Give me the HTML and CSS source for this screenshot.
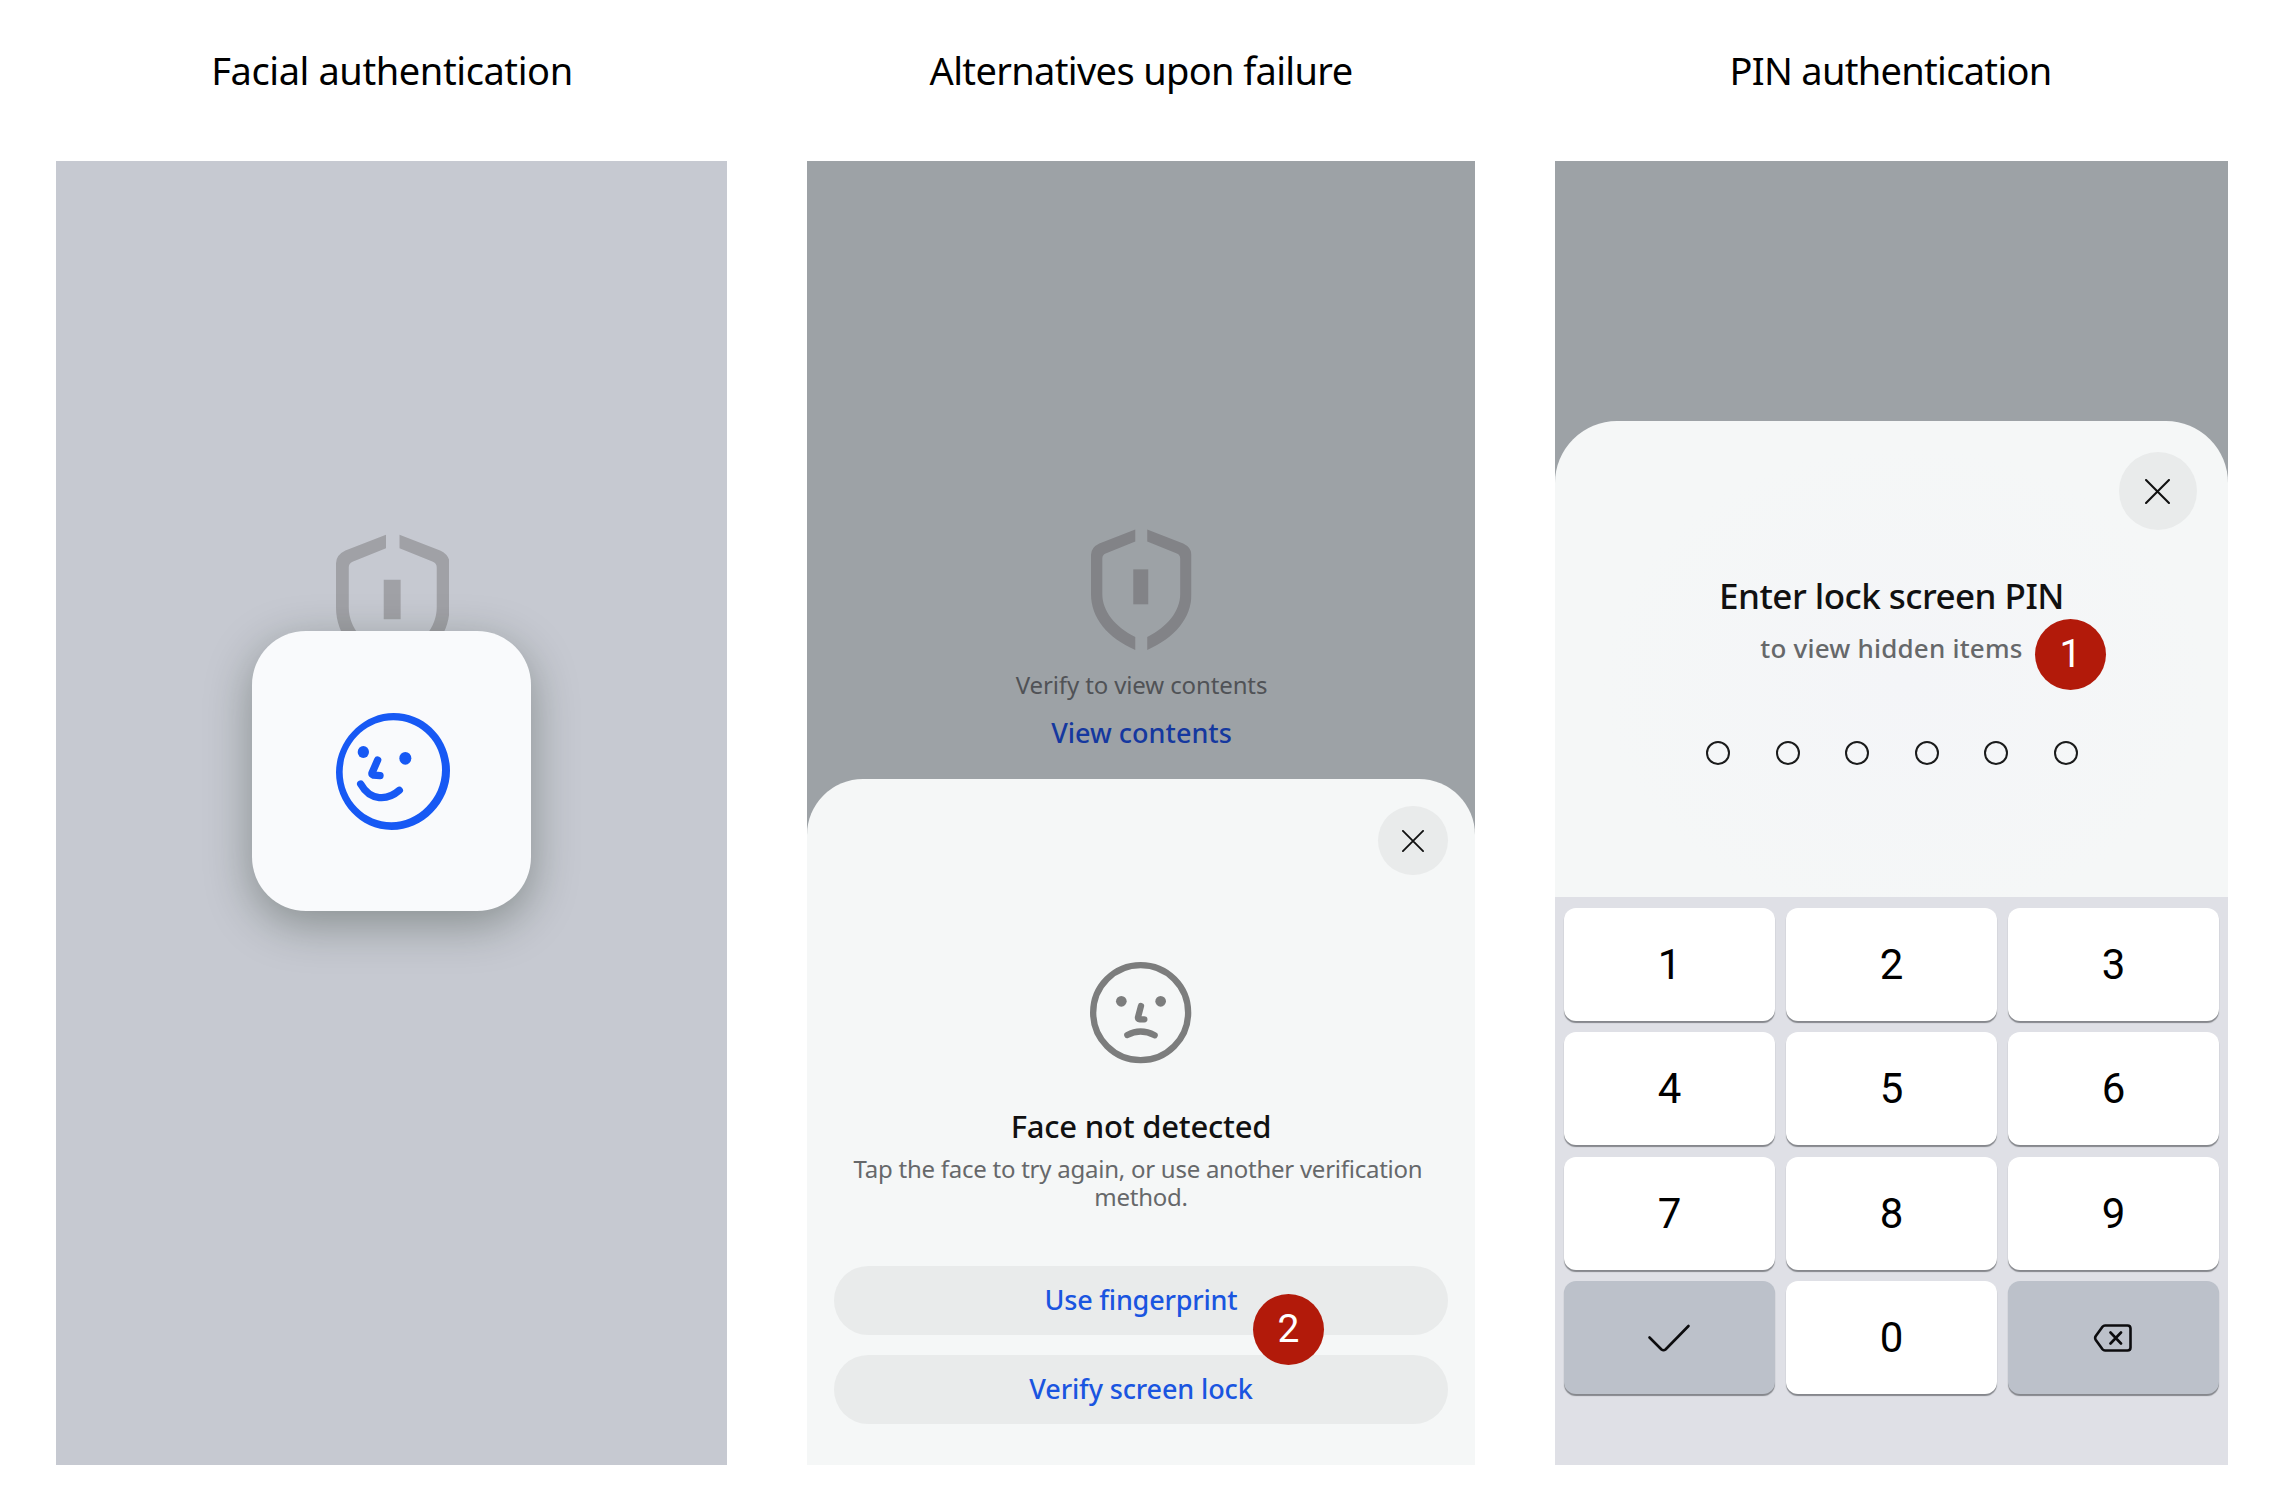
FILE: index.html
```html
<!DOCTYPE html>
<html lang="en">
<head>
<meta charset="utf-8">
<title>Authentication</title>
<link rel="stylesheet" href="styles.css">
</head>
<body>
<svg class="defs" width="0" height="0" aria-hidden="true">
  <symbol id="shield" viewBox="395 88 302 363">
    <path id="shield-half" d="M528 89 420 131Q395 143 395 165V283C395 355 445 415 528 451V412C468 382 429 335 429 283V176Q429 165 439 161L528 125Z"/>
    <use href="#shield-half" transform="matrix(-1 0 0 1 1092 0)"/>
    <rect x="522" y="209" width="45" height="105"/>
  </symbol>
  <symbol id="cross" viewBox="0 0 24 24">
    <path d="M1 1 23 23M23 1 1 23" fill="none" stroke="currentColor" stroke-width="2" stroke-linecap="round"/>
  </symbol>
</svg>

<main class="page">
  <section class="col">
    <h2 class="heading heading-facial">Facial authentication</h2>
    <div class="screen screen-facial">
      <svg class="shield shield-large"><use href="#shield"/></svg>
      <div class="face-card">
        <svg class="smile" viewBox="0 0 342 351">
          <path fill-rule="evenodd" d="M173 0C268 0 342 78 342 173S262 351 167 351 0 270 0 178 78 0 173 0ZM172 22C90 22 20 92 20 177S88 328 166 328 318 258 318 171 250 22 172 22Z"/>
          <ellipse cx="82" cy="117" rx="17" ry="18"/>
          <ellipse cx="208" cy="136" rx="18" ry="19"/>
          <path class="line" d="M125 141 108 180Q107 184 112 186L132 188M74 213C103 265 155 263 190 232"/>
        </svg>
      </div>
    </div>
  </section>

  <section class="col">
    <h2 class="heading heading-alternatives">Alternatives upon failure</h2>
    <div class="screen screen-dim">
      <div class="backdrop">
        <svg class="shield"><use href="#shield"/></svg>
        <p class="verify">Verify to view contents</p>
        <a class="view">View contents</a>
      </div>
      <div class="sheet sheet-face">
        <button class="close"><svg><use href="#cross"/></svg></button>
        <svg class="sad" viewBox="150 96 304 304">
          <circle cx="302" cy="248" r="142.500"/>
          <path d="M303 228 294 262Q293 268 299 268H313M262 315Q302 294 344 316"/>
          <circle class="dot" cx="244" cy="214" r="16"/>
          <circle class="dot" cx="362" cy="214" r="16"/>
        </svg>
        <h3 class="not-detected">Face not detected</h3>
        <p class="hint"><span class="hint-line hint-first">Tap the face to try again, or use another verification</span> <span class="hint-line">method.</span></p>
        <div class="actions">
          <button class="action action-finger">Use fingerprint</button>
          <button class="action">Verify screen lock</button>
        </div>
        <span class="badge badge-two">2</span>
      </div>
    </div>
  </section>

  <section class="col">
    <h2 class="heading heading-pin">PIN authentication</h2>
    <div class="screen screen-dim">
      <div class="backdrop backdrop-short"></div>
      <div class="sheet sheet-pin">
        <button class="close close-large"><svg><use href="#cross"/></svg></button>
        <h3 class="enter">Enter lock screen PIN</h3>
        <p class="hidden-items">to view hidden items</p>
        <div class="dots"><i></i><i></i><i></i><i></i><i></i><i></i></div>
        <span class="badge badge-one">1</span>
      </div>
      <div class="keypad">
        <button class="key">1</button><button class="key">2</button><button class="key">3</button>
        <button class="key">4</button><button class="key">5</button><button class="key">6</button>
        <button class="key">7</button><button class="key">8</button><button class="key">9</button>
        <button class="key key-grey">
          <svg width="44" height="30" viewBox="0 0 44 30"><path d="M2.500 14.500 14.500 26.500Q16.500 28 18.500 26.500L41.500 3"/></svg>
        </button>
        <button class="key">0</button>
        <button class="key key-grey">
          <svg width="40" height="30" viewBox="0 0 40 30"><path d="M12 2.500H34.500Q37.500 2.500 37.500 5.500V24.500Q37.500 27.500 34.500 27.500H12Q10.500 27.500 9.500 26.200L2.800 17Q1.500 15 2.800 13L9.500 3.800Q10.500 2.500 12 2.500ZM17.500 9.500 28 20.500M28 9.500 17.500 20.500"/></svg>
        </button>
      </div>
    </div>
  </section>
</main>
</body>
</html>
```
FILE: styles.css
```css
* { box-sizing: border-box; }
body {
  margin: 0;
  background: #fff;
  font-family: "Noto Sans", "Open Sans", sans-serif;
  color: #000;
}
h2, h3, p { margin: 0; font-weight: 400; }
button { border: 0; padding: 0; font-family: inherit; color: inherit; }
.defs { position: absolute; }

.page {
  display: grid;
  grid-template-columns: 671px 668px 673px;
  column-gap: 80px;
  padding: 40px 0 0 56px;
}
.heading {
  height: 60px;
  margin-bottom: 61px;
  font-size: 38px;
  line-height: 60px;
  text-align: center;
  white-space: nowrap;
}
.heading-facial { letter-spacing: -.41px; padding-left: 1px; }
.heading-alternatives { letter-spacing: -.65px; }
.heading-pin { letter-spacing: -.69px; padding-right: 2px; }

.screen { position: relative; display: flex; flex-direction: column; height: 1304px; }
.screen-facial { align-items: center; padding: 372.5px 0 0 2px; background: #c6c9d1; }
.screen-dim { background: #9da2a6; }

.shield { display: block; width: 100.500px; height: 121px; fill: #828387; }
.shield-large { width: 113.500px; height: 137px; fill: #a0a1a6; }

/* The card floats above the shield */
.face-card {
  position: absolute;
  left: 195.700px;
  top: 470.300px;
  display: flex;
  align-items: center;
  justify-content: center;
  width: 279.600px;
  height: 279.600px;
  padding: 1px 0 0 4px;
  border-radius: 54px;
  background: #f9fafc;
  box-shadow: 0 13px 46px rgba(15, 30, 15, .34);
}
.smile { width: 114px; height: 117px; fill: #1759f4; }
.smile .line {
  fill: none;
  stroke: #1759f4;
  stroke-width: 22;
  stroke-linecap: round;
  stroke-linejoin: round;
}

.backdrop {
  display: flex;
  flex-direction: column;
  align-items: center;
  height: 617.500px;
  padding: 368px 0 0 1px;
}
.backdrop-short { height: 260px; padding: 0; }
.verify { margin-top: 19px; font-size: 24px; line-height: 32px; letter-spacing: -.12px; color: #505256; }
.view { margin-top: 14px; font-size: 27px; font-weight: 500; line-height: 36px; color: #15389f; }

.sheet {
  position: relative;
  display: flex;
  flex-direction: column;
  align-items: center;
  background: #f5f7f7;
}
.sheet-face { height: 686.500px; padding: 27.500px 27.300px 0; border-radius: 56px 56px 0 0; }
.sheet-pin {
  height: 475.500px;
  padding: 30.700px 31px 0;
  border-radius: 62px 62px 0 0;
  background: radial-gradient(ellipse 45% 50% at 52% 55%, #f4f5f8, #f5f7f7);
}
.close {
  display: flex;
  align-items: center;
  justify-content: center;
  align-self: flex-end;
  flex: none;
  width: 69.400px;
  height: 69.400px;
  border-radius: 50%;
  background: #e9ebeb;
  color: #111;
}
.close svg { width: 22px; height: 22px; }
.close-large { width: 78.500px; height: 78.500px; }
.close-large svg { width: 25px; height: 25px; margin-top: 2px; }

.sad { flex: none; width: 101.300px; height: 101.300px; margin-top: 87px; fill: none; stroke: #7c7d7d; stroke-width: 19; stroke-linecap: round; stroke-linejoin: round; }
.sad .dot { fill: #7c7d7d; stroke: none; }
.not-detected { margin-top: 42px; font-size: 31px; font-weight: 500; line-height: 40px; letter-spacing: -.21px; color: #111; }
.hint { margin-top: 9px; font-size: 24px; line-height: 28px; letter-spacing: -.25px; text-align: center; color: #66686a; white-space: nowrap; }
.hint-line { display: block; }
.hint-first { padding-right: 6px; }
.actions { display: flex; flex-direction: column; gap: 20.500px; align-self: stretch; margin-top: 55.500px; }
.action {
  height: 68.500px;
  padding-bottom: 2px;
  border-radius: 34.250px;
  background: #e9ebeb;
  color: #1a55e0;
  font-size: 27px;
  font-weight: 500;
  letter-spacing: -.12px;
}
.action-finger { letter-spacing: -.2px; }

/* Numbered callouts lie over the sheets */
.badge {
  position: absolute;
  width: 71px;
  height: 71px;
  border-radius: 50%;
  background: #b21a0a;
  color: #fff;
  font-family: Roboto, sans-serif;
  font-size: 39px;
  line-height: 71px;
  text-align: center;
}
.badge-two { left: 446px; top: 515px; }
.badge-one { left: 480px; top: 198px; }

.enter { margin-top: 44px; font-size: 35px; font-weight: 500; line-height: 44px; letter-spacing: -.53px; color: #111; }
.hidden-items { margin-top: 14px; font-size: 26px; font-weight: 500; line-height: 32px; letter-spacing: .21px; color: #66686a; }
.dots { display: flex; gap: 45.500px; margin: 77px 0 0 1px; }
.dots i { width: 24px; height: 24px; border: 2px solid #1a1b1b; border-radius: 50%; }

.keypad {
  display: grid;
  flex: 1;
  grid-template-columns: repeat(3, 1fr);
  grid-auto-rows: 113px;
  gap: 11.400px;
  padding: 11.500px 9.200px 0;
  background: #dfe0e6;
}
.key {
  display: flex;
  align-items: center;
  justify-content: center;
  border-radius: 12px;
  background: #fff;
  box-shadow: 0 2px 1px #85878c;
  font-family: Roboto, sans-serif;
  font-size: 42px;
}
.key-grey { background: #bcc1ca; }
.key svg { fill: none; stroke: #0c0c0e; stroke-width: 2.600; stroke-linecap: round; stroke-linejoin: round; }
```
